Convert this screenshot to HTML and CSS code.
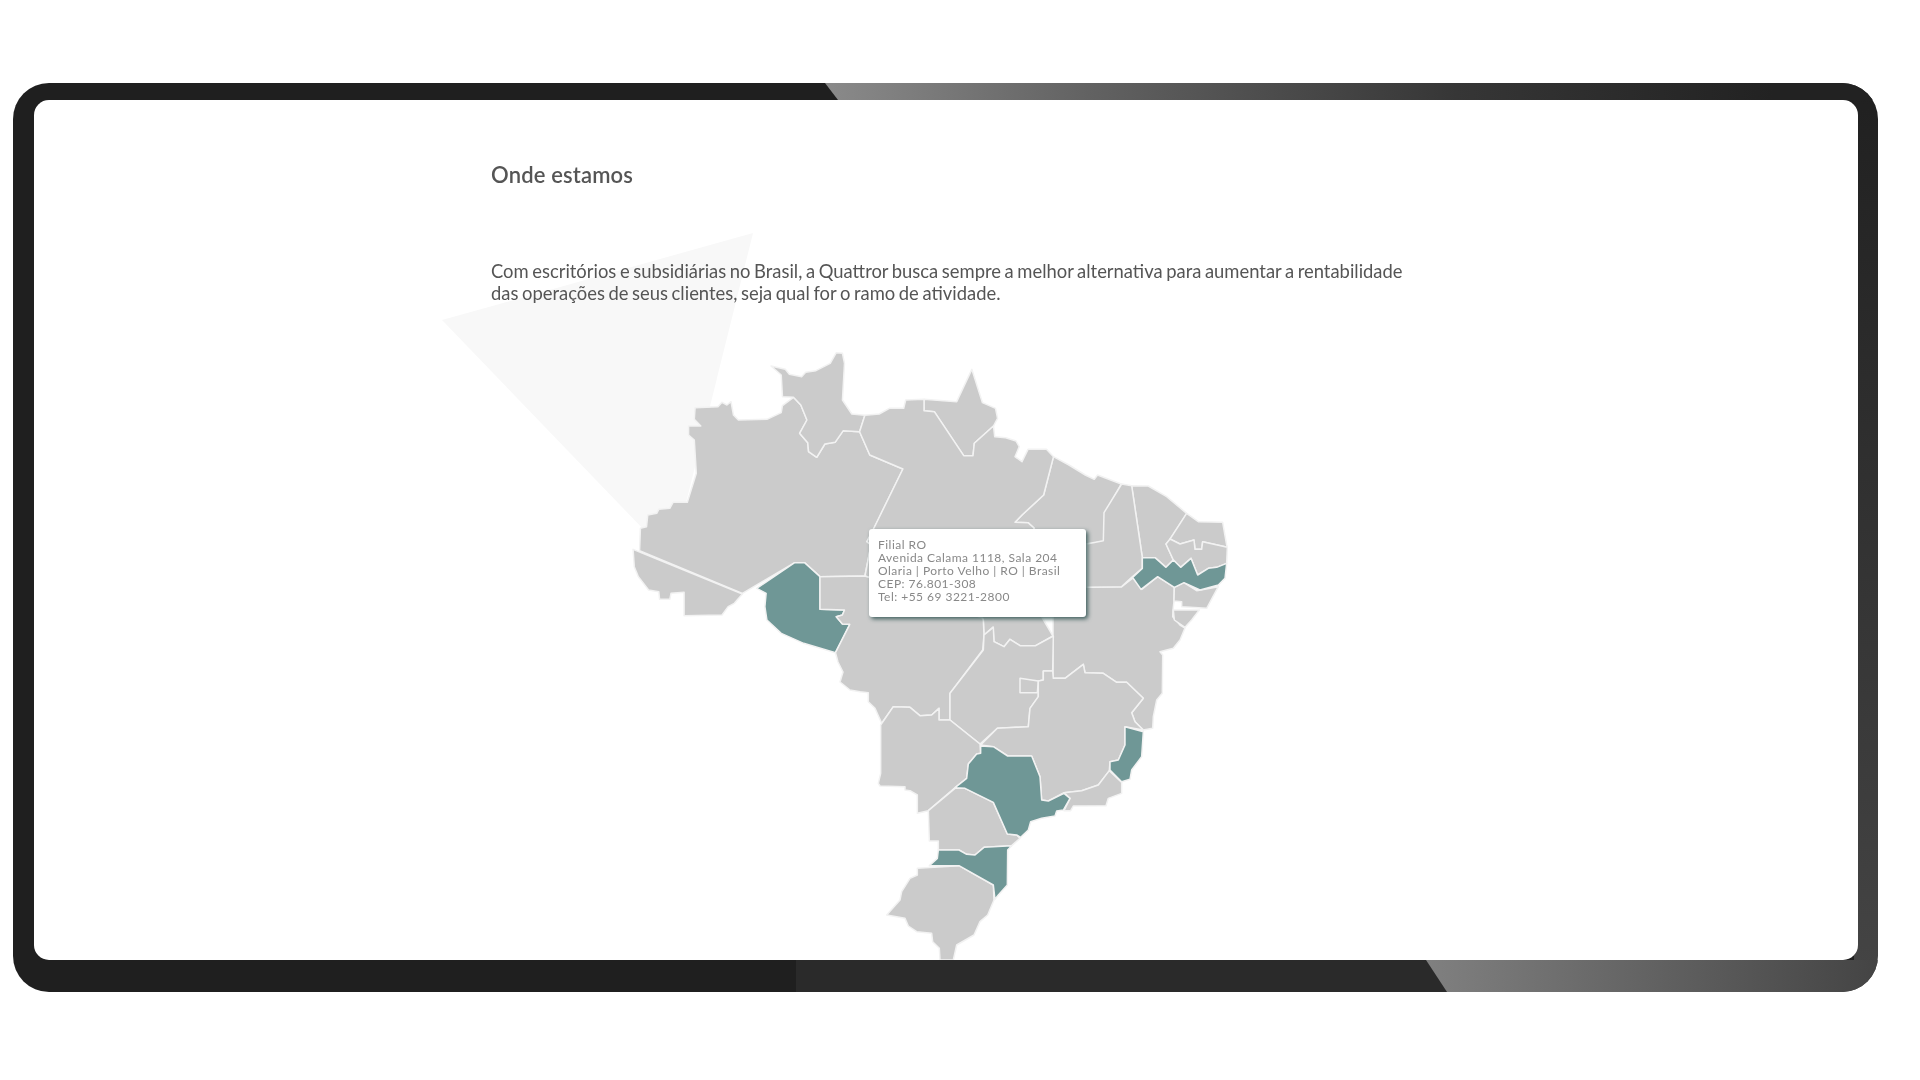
FILE: index.html
```html
<!DOCTYPE html>
<html lang="pt-BR">
<head>
<meta charset="utf-8">
<title>Onde estamos</title>
<link rel="stylesheet" href="styles.css">
</head>
<body>
<div class="frame">
  <main class="panel">
    <div class="ray"></div>
    <h2 class="title">Onde estamos</h2>
    <p class="lead">Com escritórios e subsidiárias no Brasil, a Quattror busca sempre a melhor alternativa para aumentar a rentabilidade das operações de seus clientes, seja qual for o ramo de atividade.</p>
    <div class="map">
      <svg class="map-svg" viewBox="620 340 620 620" width="620" height="620" role="img" aria-label="Mapa do Brasil">
        <g transform="translate(620 340) scale(0.40816 0.33333)">
          <polygon class="st" points="32,628 300,762 280,790 265,800 250,825 157,827 157,757 125,760 122,778 97,778 95,755 70,750 45,710 35,680"/>
          <polygon class="st" points="50,565 65,560 68,525 90,520 95,508 122,505 130,487 165,487 187,400 182,300 168,285 168,258 198,258 182,238 184,203 240,200 250,187 262,195 272,185 278,225 290,240 360,238 395,218 398,197 425,172 443,195 458,240 440,280 460,308 462,335 482,352 502,312 527,307 547,272 587,275 612,345 693,387 620,570 605,605 615,615 600,708 490,710 452,668 428,668 300,760 48,632"/>
          <polygon class="st" points="370,78 405,88 415,103 445,110 455,97 480,92 515,70 530,38 545,40 550,70 545,180 568,222 600,226 587,275 547,272 527,307 502,312 482,352 462,335 460,308 440,280 458,240 443,195 425,172 398,170 395,105"/>
          <polygon class="st" points="745,178 825,185 862,88 888,188 920,205 925,235 915,258 868,310 865,347 842,347 770,215 745,212"/>
          <polygon class="st" points="1062,350 1100,375 1140,405 1162,418 1170,405 1228,432 1190,515 1185,605 1140,612 1140,745 1062,830 1038,780 1015,565 1000,548 968,547 985,525 1038,465"/>
          <polygon class="st hi" points="335,745 428,668 452,668 490,710 490,808 550,810 545,825 530,830 545,852 563,853 528,938 450,910 395,880 360,840 355,800 358,760"/>
        </g>
        <polygon class="st" points="864.9,415.3 879.2,414 889.4,408.3 903.7,408.3 905.7,400 924,399.3 924,410.7 934.3,411.7 963.7,455.7 973,455.7 974.3,443.3 993.5,426 994.7,436.7 1005.7,437.7 1016,441 1019.2,446.7 1015,456.7 1022,461.7 1028,449.3 1046.5,449.3 1053.5,456.7 1043.6,495 1022,515 1015,522.3 1028,522.7 1034,528 1020,580 1053,636 1035.7,645.7 1020,645.7 1010,639.3 1004,646.7 994,641.7 993,627 984,635 983.3,620 982.4,618 865,576 871,545 867,541.7 873,530 902.9,469 869.8,455 859.6,431.7"/>
        <polygon class="st" points="820,576.7 865,576 982.4,618 983.3,620 984,635 982.7,650 950,693.3 950,720 939,720 939,708.3 931.7,715 920,715.7 910,707.3 893.3,706.7 881.7,723.3 875,708.3 868.3,701.7 868.3,692.7 860,691.7 850,690 840,682 843,672 838,662 835.5,652.7 849.8,624.3 842.4,624 836.3,616.7 842.4,615 844.5,610 820,609.3"/>
        <polygon class="st" points="1053,617 1086,587.3 1121.7,586.7 1133,578 1141.7,589.3 1157.7,576.7 1174.3,587.3 1174,601 1173,610 1172.7,616.7 1180,625 1185,628 1180,640 1173.3,648.3 1160,651.7 1162.7,655 1162.3,693.3 1156.7,700 1153.3,716.7 1152.7,728.3 1143.3,730 1135,721.7 1131.7,712.7 1143.3,698.3 1126.7,682.3 1116.7,682.3 1103.3,673.3 1085,672.7 1083.3,664.3 1065,678.3 1053,678.3"/>
        <g transform="translate(1080 470) scale(0.33333)">
          <polygon class="st" points="155,47 205,48 260,80 320,130 270,210 258,222 280,270 258,292 225,263 187,263"/>
          <polygon class="st" points="125,42 155,47 187,263 187,295 155,322 125,350 20,352 20,222 70,212 72,128"/>
          <polygon class="st" points="320,130 355,155 428,157 440,225 442,232 368,215 365,238 345,238 342,210 300,222 270,207"/>
          <polygon class="st" points="270,207 300,222 342,210 345,238 365,238 368,215 442,232 440,280 410,292 385,295 353,315 333,265 302,292 280,270 258,222"/>
          <polygon class="st" points="283,352 312,338 350,362 415,350 380,415 305,410 305,395 282,393"/>
          <polygon class="st" points="280,420 358,420 335,450 315,472 283,450"/>
          <polygon class="st hi" points="187,263 225,263 258,292 280,270 302,292 333,265 353,315 385,295 410,292 440,280 435,325 415,345 360,360 312,338 283,352 233,320 183,358 158,322 187,295"/>
        </g>
        <g transform="translate(860 620) scale(0.33333)">
          <polygon class="st" points="370,90 270,220 270,300 360,372 412,325 505,320 510,265 535,230 535,183 550,180 550,153 578,153 580,48 527,77 480,77 450,58 432,80 402,65 400,22 372,45"/>
          <polygon class="st" points="480,175 535,183 532,218 480,218"/>
          <polygon class="st" points="412,325 505,320 510,265 535,230 535,183 550,180 550,153 578,153 580,175 615,175 670,133 675,158 730,160 770,187 800,187 850,235 815,278 825,305 850,330 795,320 795,375 775,420 750,425 748,452 715,495 665,512 612,518 565,543 545,540 540,470 515,408 443,408 400,380 362,375"/>
          <polygon class="st" points="62,315 100,260 150,262 180,287 215,285 237,265 237,300 270,300 360,372 362,400 350,402 325,432 320,475 283,505 205,572 172,580 172,525 150,512 135,510 135,500 60,498 55,490 62,460"/>
          <polygon class="st" points="612,518 665,512 715,495 748,452 785,487 785,520 745,535 738,557 640,558 632,572 612,572 630,535"/>
          <polygon class="st" points="285,505 315,505 400,547 442,642 470,645 480,655 455,677 372,682 345,705 320,703 297,690 235,690 235,663 208,663 205,572"/>
          <polygon class="st" points="172,745 297,737 400,795 402,840 383,885 360,905 342,945 290,975 280,1020 240,1020 238,985 218,965 215,940 170,935 145,918 135,895 80,885 120,840 125,815 150,775 172,765"/>
          <polygon class="st hi" points="362,378 400,380 443,408 515,408 540,470 545,540 565,543 612,520 630,535 610,570 590,573 585,588 545,595 512,605 505,630 482,652 470,645 442,642 400,547 315,505 285,503 320,475 325,432 350,402 362,400"/>
          <polygon class="st hi" points="795,320 850,335 845,410 815,450 810,478 785,485 750,450 750,425 775,420 795,375"/>
          <polygon class="st hi" points="235,690 297,690 320,703 345,705 372,682 455,677 443,690 442,795 415,825 405,838 400,795 297,737 208,737 232,715"/>
        </g>
      </svg>
      <div class="tip">
        Filial RO<br>
        Avenida Calama 1118, Sala 204<br>
        Olaria | Porto Velho | RO | Brasil<br>
        CEP: 76.801-308<br>
        Tel: +55 69 3221-2800
      </div>
    </div>
  </main>
</div>
</body>
</html>
```

FILE: styles.css
```css
html, body {
  margin: 0;
  height: 100%;
  background: #fff;
  overflow: hidden;
}

.frame {
  position: relative;
  box-sizing: border-box;
  width: 1865px;
  height: 909px;
  margin: 83px 0 0 13px;
  padding: 17px 20px 32px 21px;
  border-radius: 36px;
  overflow: hidden;
  background:
    linear-gradient(180deg, #202020, #454545) right top / 24px 100% no-repeat,
    linear-gradient(#2a2a2a, #2a2a2a) right bottom / 58% 32px no-repeat,
    #1f1f1f;
  filter: blur(0.7px);
  font-family: Lato, "Liberation Sans", sans-serif;
}

.frame::before,
.frame::after {
  content: "";
  position: absolute;
  right: 0;
}

.frame::before {
  top: 0;
  left: 812px;
  height: 17px;
  background: linear-gradient(90deg, #8a8a8a 0, #626262 25%, #363636 60%, #222 90%);
  clip-path: polygon(0 0, 100% 0, 100% 100%, 13px 100%);
}

.frame::after {
  bottom: 0;
  left: 1413px;
  height: 32px;
  background: linear-gradient(90deg, #808080 0, #444 100%);
  clip-path: polygon(0 0, 100% 0, 100% 100%, 21px 100%);
}

.panel {
  position: relative;
  box-sizing: border-box;
  height: 100%;
  padding: 60px 0 0 457px;
  background: #fff;
  border-radius: 15px;
  overflow: hidden;
}

.ray {
  position: absolute;
  inset: 0;
  background: #f8f8f8;
  clip-path: polygon(408px 220px, 719px 133px, 638px 459px);
}

.title {
  position: relative;
  margin: 0;
  font-size: 22px;
  line-height: 30px;
  font-weight: 600;
  letter-spacing: 0.15px;
  color: #555;
}

.lead {
  position: relative;
  width: 916px;
  margin: 70px 0 0;
  font-size: 18.4px;
  line-height: 22px;
  word-spacing: -1.1px;
  color: #555;
}

.map {
  position: relative;
  width: 620px;
  margin: 36px 0 0 129px;
}

.map-svg {
  display: block;
}

.st {
  fill: #cbcbcb;
  stroke: #f2f2f2;
  stroke-width: 1.5px;
  stroke-linejoin: round;
  vector-effect: non-scaling-stroke;
}

.hi {
  fill: #6f9796;
}

.tip {
  position: absolute;
  left: 249px;
  top: 189px;
  box-sizing: border-box;
  width: 217px;
  height: 88px;
  padding: 9px 9px 0;
  background: #fff;
  border-radius: 3px;
  box-shadow: 2px 2px 4px #3f5f5e;
  font-size: 12px;
  line-height: 13px;
  color: #888;
  letter-spacing: 0.47px;
}
```
